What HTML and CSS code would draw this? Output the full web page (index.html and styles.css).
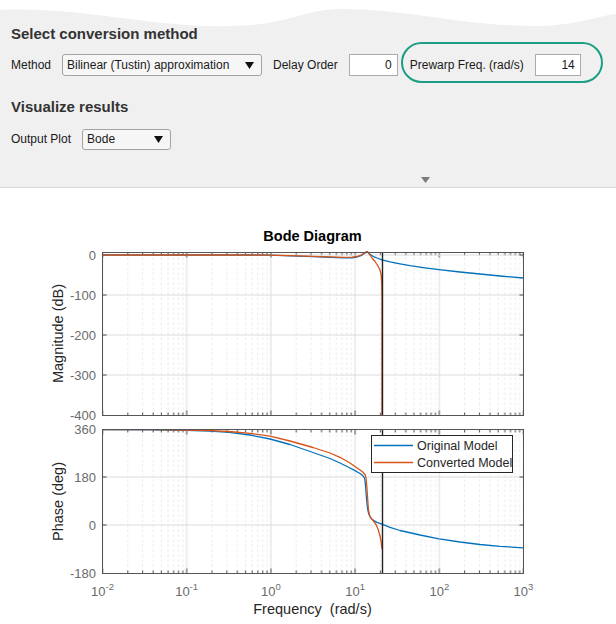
FILE: index.html
```html
<!DOCTYPE html>
<html>
<head>
<meta charset="utf-8">
<link rel="stylesheet" href="styles.css">
</head>
<body>
<div class="panel">
  <svg class="wave" width="616" height="32" viewBox="0 0 616 32">
    <path d="M0,0 L0,10 C80,6 150,28 230,26 C290,25 300,10 340,9 C400,8 470,27 540,26 C580,25 600,15 616,14 L616,0 Z" fill="#ffffff"/>
  </svg>
  <h2 class="section-title">Select conversion method</h2>
  <div class="row">
    <span class="label">Method</span>
    <div class="dropdown method">
      <span class="dd-text">Bilinear (Tustin) approximation</span>
      <svg class="dd-arrow" width="9" height="7" viewBox="0 0 9 7"><polygon points="0,0 9,0 4.5,7" fill="#111"/></svg>
    </div>
    <span class="label delay-label">Delay Order</span>
    <div class="numbox delay">0</div>
    <span class="label warp-label">Prewarp Freq. (rad/s)</span>
    <div class="numbox warp">14</div>
  </div>
  <div class="highlight"></div>
  <h2 class="section-title second">Visualize results</h2>
  <div class="row row-plot">
    <span class="label">Output Plot</span>
    <div class="dropdown plot-select">
      <span class="dd-text">Bode</span>
      <svg class="dd-arrow" width="9" height="7" viewBox="0 0 9 7"><polygon points="0,0 9,0 4.5,7" fill="#111"/></svg>
    </div>
  </div>
  <svg class="collapse" width="9" height="6" viewBox="0 0 9 6"><polygon points="0,0 9,0 4.5,6" fill="#7b7b7b"/></svg>
</div>

<svg class="bode" width="616" height="436" viewBox="0 188 616 436">
  <defs>
    <pattern id="gridTop" patternUnits="userSpaceOnUse" x="101.5" y="252.5" width="84.2" height="163">
      <g class="minor">
        <line x1="26.35" y1="0" x2="26.35" y2="163"/><line x1="41.17" y1="0" x2="41.17" y2="163"/>
        <line x1="51.69" y1="0" x2="51.69" y2="163"/><line x1="59.85" y1="0" x2="59.85" y2="163"/>
        <line x1="66.52" y1="0" x2="66.52" y2="163"/><line x1="72.16" y1="0" x2="72.16" y2="163"/>
        <line x1="77.04" y1="0" x2="77.04" y2="163"/><line x1="81.35" y1="0" x2="81.35" y2="163"/>
      </g>
      <line class="major" x1="1" y1="0" x2="1" y2="163"/>
      <g class="tick">
        <line x1="1" y1="0" x2="1" y2="5"/><line x1="1" y1="158" x2="1" y2="163"/>
        <line x1="26.35" y1="0" x2="26.35" y2="3"/><line x1="41.17" y1="0" x2="41.17" y2="3"/>
        <line x1="51.69" y1="0" x2="51.69" y2="3"/><line x1="59.85" y1="0" x2="59.85" y2="3"/>
        <line x1="66.52" y1="0" x2="66.52" y2="3"/><line x1="72.16" y1="0" x2="72.16" y2="3"/>
        <line x1="77.04" y1="0" x2="77.04" y2="3"/><line x1="81.35" y1="0" x2="81.35" y2="3"/>
        <line x1="26.35" y1="160" x2="26.35" y2="163"/><line x1="41.17" y1="160" x2="41.17" y2="163"/>
        <line x1="51.69" y1="160" x2="51.69" y2="163"/><line x1="59.85" y1="160" x2="59.85" y2="163"/>
        <line x1="66.52" y1="160" x2="66.52" y2="163"/><line x1="72.16" y1="160" x2="72.16" y2="163"/>
        <line x1="77.04" y1="160" x2="77.04" y2="163"/><line x1="81.35" y1="160" x2="81.35" y2="163"/>
      </g>
    </pattern>
    <pattern id="gridBot" patternUnits="userSpaceOnUse" x="101.5" y="429.5" width="84.2" height="144">
      <g class="minor">
        <line x1="26.35" y1="0" x2="26.35" y2="144"/><line x1="41.17" y1="0" x2="41.17" y2="144"/>
        <line x1="51.69" y1="0" x2="51.69" y2="144"/><line x1="59.85" y1="0" x2="59.85" y2="144"/>
        <line x1="66.52" y1="0" x2="66.52" y2="144"/><line x1="72.16" y1="0" x2="72.16" y2="144"/>
        <line x1="77.04" y1="0" x2="77.04" y2="144"/><line x1="81.35" y1="0" x2="81.35" y2="144"/>
      </g>
      <line class="major" x1="1" y1="0" x2="1" y2="144"/>
      <g class="tick">
        <line x1="1" y1="0" x2="1" y2="5"/><line x1="1" y1="139" x2="1" y2="144"/>
        <line x1="26.35" y1="0" x2="26.35" y2="3"/><line x1="41.17" y1="0" x2="41.17" y2="3"/>
        <line x1="51.69" y1="0" x2="51.69" y2="3"/><line x1="59.85" y1="0" x2="59.85" y2="3"/>
        <line x1="66.52" y1="0" x2="66.52" y2="3"/><line x1="72.16" y1="0" x2="72.16" y2="3"/>
        <line x1="77.04" y1="0" x2="77.04" y2="3"/><line x1="81.35" y1="0" x2="81.35" y2="3"/>
        <line x1="26.35" y1="141" x2="26.35" y2="144"/><line x1="41.17" y1="141" x2="41.17" y2="144"/>
        <line x1="51.69" y1="141" x2="51.69" y2="144"/><line x1="59.85" y1="141" x2="59.85" y2="144"/>
        <line x1="66.52" y1="141" x2="66.52" y2="144"/><line x1="72.16" y1="141" x2="72.16" y2="144"/>
        <line x1="77.04" y1="141" x2="77.04" y2="144"/><line x1="81.35" y1="141" x2="81.35" y2="144"/>
      </g>
    </pattern>
  </defs>

  <text class="title" x="312.5" y="241">Bode Diagram</text>

  <!-- magnitude axes -->
  <rect x="102.5" y="252.5" width="421" height="163" fill="url(#gridTop)"/>
  <g class="hgrid">
    <line x1="102.5" y1="255" x2="523.5" y2="255"/>
    <line x1="102.5" y1="295" x2="523.5" y2="295"/>
    <line x1="102.5" y1="335" x2="523.5" y2="335"/>
    <line x1="102.5" y1="375" x2="523.5" y2="375"/>
  </g>
  <g class="tick">
    <line x1="102.5" y1="255" x2="106.5" y2="255"/><line x1="519.5" y1="255" x2="523.5" y2="255"/>
    <line x1="102.5" y1="295" x2="106.5" y2="295"/><line x1="519.5" y1="295" x2="523.5" y2="295"/>
    <line x1="102.5" y1="335" x2="106.5" y2="335"/><line x1="519.5" y1="335" x2="523.5" y2="335"/>
    <line x1="102.5" y1="375" x2="106.5" y2="375"/><line x1="519.5" y1="375" x2="523.5" y2="375"/>
  </g>
  <polyline class="c-blue" points="102,255 250,255 270,255.2 290,255.8 313,256.6 330,257.3 345,257.8 352,257.8 357,257 361,255.6 364,253.8 366,252.2 367,251.6 368,252.2 370,254.2 373,256.3 377,258 382,259.8 390,261.8 400,263.8 410,265.6 425,267.8 439,269.6 460,272 480,274 500,276 523,278"/>
  <polyline class="c-orange" points="102,255 250,255 270,255.1 290,255.6 313,256.3 330,256.9 345,257.3 352,257.2 357,256.5 361,255 364,253.4 366,252 367,251.6 368,252.6 370,255 372,258 375,261.5 378,266 380,270 381.2,275 381.8,285 382,300 382,415"/>
  <line class="nyq" x1="382.5" y1="252.5" x2="382.5" y2="415.5"/>
  <rect class="axbox" x="102.5" y="252.5" width="421" height="163"/>

  <g class="ytick-label">
    <text x="96" y="259.5">0</text>
    <text x="96" y="299.5">-100</text>
    <text x="96" y="339.5">-200</text>
    <text x="96" y="379.5">-300</text>
    <text x="96" y="420">-400</text>
  </g>
  <text class="axlabel" transform="translate(63,333.5) rotate(-90)">Magnitude (dB)</text>

  <!-- phase axes -->
  <rect x="102.5" y="429.5" width="421" height="144" fill="url(#gridBot)"/>
  <g class="hgrid">
    <line x1="102.5" y1="477" x2="523.5" y2="477"/>
    <line x1="102.5" y1="525" x2="523.5" y2="525"/>
  </g>
  <g class="tick">
    <line x1="102.5" y1="477" x2="106.5" y2="477"/><line x1="519.5" y1="477" x2="523.5" y2="477"/>
    <line x1="102.5" y1="525" x2="106.5" y2="525"/><line x1="519.5" y1="525" x2="523.5" y2="525"/>
  </g>
  <polyline class="c-blue" points="102,429.6 150,429.8 186,430.3 210,431.1 229,432.3 250,435 270,439 290,444.5 313,452.5 330,458.5 340,463 350,468 355,470.6 360,473.5 363,475.8 364.5,478 365.3,483 366,492 366.8,502 367.6,509 368.8,514 370.5,517.6 373,520.2 377,522.3 382,524.2 390,527.3 400,530.5 420,535 439,538.8 460,542 480,544.5 500,546.3 523,547.8"/>
  <polyline class="c-orange" points="102,429.6 150,429.7 186,430 210,430.6 229,431.5 250,433.3 270,436.2 290,441 313,447.5 330,453 340,457.3 350,463 355,466.5 360,470 363,472.3 365,474.5 366,478 366.8,486 367.6,498 368.4,509 369.5,515 371,518.3 373.5,521 376,524.5 378,529 380,536 381.2,542 382,549"/>
  <line class="nyq" x1="382.5" y1="429.5" x2="382.5" y2="573.5"/>
  <rect class="axbox" x="102.5" y="429.5" width="421" height="144"/>

  <g class="legend">
    <rect class="legend-box" x="371.5" y="435.5" width="141" height="37"/>
    <line class="c-blue" x1="374" y1="445.5" x2="413" y2="445.5"/>
    <line class="c-orange" x1="374" y1="462.5" x2="413" y2="462.5"/>
    <text class="legend-text" x="417" y="450">Original Model</text>
    <text class="legend-text" x="417" y="467">Converted Model</text>
  </g>

  <g class="ytick-label">
    <text x="96" y="434">360</text>
    <text x="96" y="481.5">180</text>
    <text x="96" y="529.5">0</text>
    <text x="96" y="578">-180</text>
  </g>
  <text class="axlabel" transform="translate(63,501.5) rotate(-90)">Phase (deg)</text>

  <g class="xtick-label">
    <text x="102.5" y="596">10<tspan class="sup" dy="-6">-2</tspan></text>
    <text x="186.7" y="596">10<tspan class="sup" dy="-6">-1</tspan></text>
    <text x="270.9" y="596">10<tspan class="sup" dy="-6">0</tspan></text>
    <text x="355.1" y="596">10<tspan class="sup" dy="-6">1</tspan></text>
    <text x="439.3" y="596">10<tspan class="sup" dy="-6">2</tspan></text>
    <text x="523.5" y="596">10<tspan class="sup" dy="-6">3</tspan></text>
  </g>
  <text class="xlabel" x="312.5" y="614">Frequency&#160; (rad/s)</text>
</svg>
</body>
</html>
```
FILE: styles.css
```css
* {
  box-sizing: border-box;
}

html, body {
  margin: 0;
  padding: 0;
  background: #ffffff;
}

body {
  width: 616px;
  height: 624px;
  overflow: hidden;
  font-family: "Liberation Sans", Arial, sans-serif;
}

.panel {
  position: relative;
  height: 188px;
  background: #f0f0f0;
  border-bottom: 1px solid #d8d8d8;
  padding: 25px 0 0 11px;
  display: flex;
  flex-direction: column;
}

.wave {
  position: absolute;
  left: 0;
  top: 0;
  display: block;
}

.section-title {
  position: relative;
  margin: 0;
  font-size: 15px;
  line-height: 18px;
  font-weight: bold;
  color: #333333;
}

.section-title.second {
  margin-top: 22px;
}

.row {
  display: flex;
  align-items: center;
  height: 22px;
  margin-top: 11px;
  font-size: 12px;
  color: #1a1a1a;
}

.row-plot {
  margin-top: 12px;
}

.label {
  white-space: nowrap;
}

.dropdown {
  display: flex;
  align-items: center;
  justify-content: space-between;
  height: 22px;
  border: 1px solid #a3a3a3;
  border-radius: 3px;
  background: #f6f6f6;
  padding: 0 7px 0 4px;
  color: #1a1a1a;
}

.dd-arrow {
  display: block;
}

.dropdown.method {
  width: 200px;
  margin-left: 11px;
}

.dropdown.plot-select {
  width: 89px;
  height: 21px;
  margin-left: 11px;
}

.delay-label {
  margin-left: 11px;
}

.warp-label {
  margin-left: 12px;
}

.numbox {
  height: 22px;
  border: 1px solid #ababab;
  background: #ffffff;
  text-align: right;
  padding-right: 5px;
  line-height: 20px;
  margin-left: 11px;
}

.numbox.delay {
  width: 49px;
}

.numbox.warp {
  width: 46px;
}

.highlight {
  position: absolute;
  left: 401px;
  top: 42px;
  width: 202px;
  height: 41px;
  border: 2.5px solid #1b9e84;
  border-radius: 21px;
}

.collapse {
  display: block;
  margin-top: auto;
  margin-left: 410px;
  margin-bottom: 4px;
}

.bode {
  display: block;
}

.bode text {
  font-family: "Liberation Sans", Arial, sans-serif;
}

.title {
  font-size: 14.5px;
  font-weight: bold;
  text-anchor: middle;
  fill: #000000;
}

.minor line {
  stroke: #e9e9e9;
  stroke-width: 1;
  stroke-dasharray: 2.5 2.5;
}

.major {
  stroke: #dcdcdc;
  stroke-width: 1;
}

.hgrid line {
  stroke: #dcdcdc;
  stroke-width: 1;
}

.tick line {
  stroke: #4d4d4d;
  stroke-width: 1;
}

.axbox {
  fill: none;
  stroke: #555555;
  stroke-width: 1;
}

.nyq {
  stroke: #222222;
  stroke-width: 1.4;
}

.c-blue {
  fill: none;
  stroke: #0072bd;
  stroke-width: 1.3;
  stroke-linejoin: round;
}

.c-orange {
  fill: none;
  stroke: #d95319;
  stroke-width: 1.3;
  stroke-linejoin: round;
}

.legend-box {
  fill: #ffffff;
  stroke: #262626;
  stroke-width: 1;
}

.legend-text {
  font-size: 12.5px;
  fill: #262626;
}

.ytick-label text {
  font-size: 13px;
  fill: #6b6b6b;
  text-anchor: end;
}

.xtick-label text {
  font-size: 13px;
  fill: #6b6b6b;
  text-anchor: middle;
}

.sup {
  font-size: 9.5px;
}

.axlabel {
  font-size: 14.5px;
  fill: #262626;
  text-anchor: middle;
}

.xlabel {
  font-size: 14.5px;
  fill: #262626;
  text-anchor: middle;
}
```
